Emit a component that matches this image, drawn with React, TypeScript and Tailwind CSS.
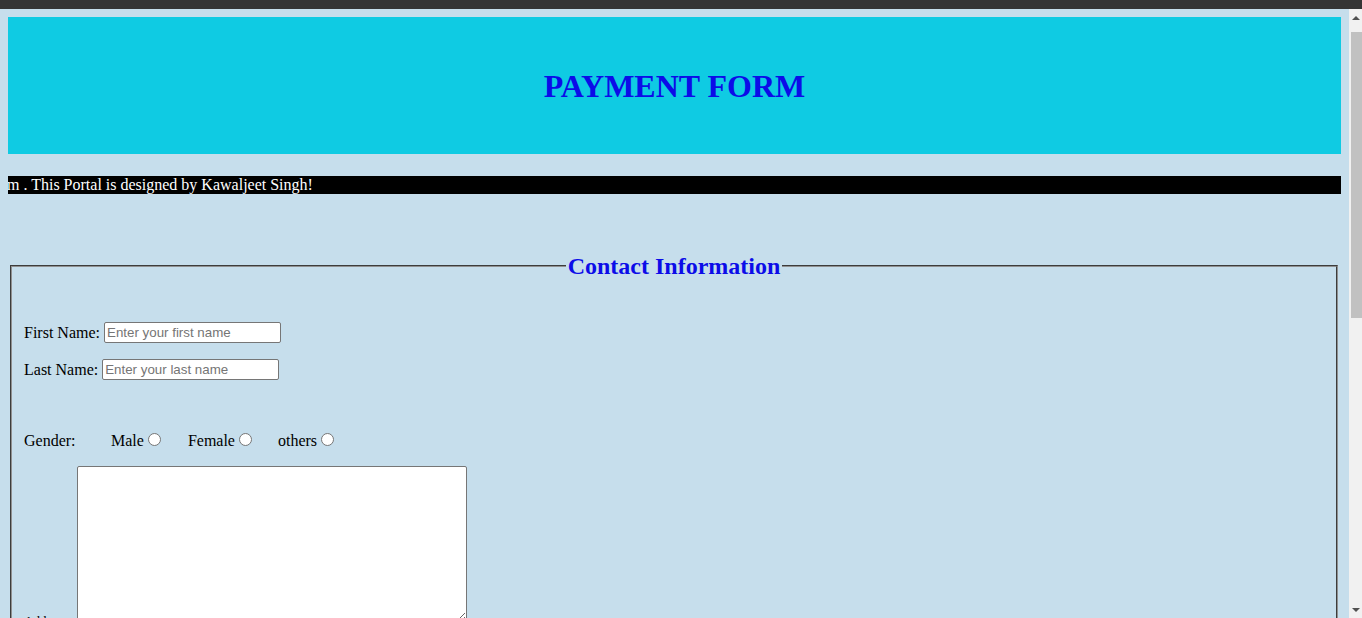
import React from "react";

function Scrollbar() {
  return (
    <div className="w-[13px] bg-[#f1f1f1] flex flex-col items-end">
      <div className="h-[23px] w-full flex justify-center pt-[7px]">
        <div className="w-0 h-0 border-l-[4px] border-r-[4px] border-b-[4px] border-l-transparent border-r-transparent border-b-[#505050]" />
      </div>
      <div className="h-[286px] w-[11px] bg-[#c1c1c1]" />
      <div className="flex-1" />
      <div className="h-[14px] w-full flex justify-center pt-[4px]">
        <div className="w-0 h-0 border-l-[4px] border-r-[4px] border-t-[4px] border-l-transparent border-r-transparent border-t-[#505050]" />
      </div>
    </div>
  );
}

function TextInput({ placeholder }: { placeholder: string }) {
  return (
    <input
      type="text"
      placeholder={placeholder}
      className="w-[177px] h-[21px] rounded-[2px] border border-[#767676] bg-white px-[2px] text-[13.33px] font-['Liberation_Sans',Arial,sans-serif] text-black placeholder:text-[#757575] outline-none"
    />
  );
}

function Radio({ label, className = "" }: { label: string; className?: string }) {
  return (
    <span className={`flex items-center ${className}`}>
      <span>{label}</span>
      <input
        type="radio"
        name="gender"
        className="appearance-none w-[13px] h-[13px] ml-[4px] mt-[-3px] rounded-full border border-[#767676] bg-white"
      />
    </span>
  );
}

export default function App() {
  return (
    <div className="w-[1362px] h-[618px] overflow-hidden flex flex-col bg-[#c6deec] font-['Liberation_Serif','Times_New_Roman',serif] text-[16px] text-black">
      <div className="h-[9px] bg-[#353535]" />
      <div className="flex flex-1 min-h-0">
        <div className="flex-1 overflow-hidden px-2 pt-2">
          <header className="h-[137px] bg-[#0fcbe3] flex items-center justify-center">
            <h1 className="text-[32px] font-bold text-[#0c0ce8] leading-none">PAYMENT FORM</h1>
          </header>

          <div className="mt-[22px] h-[18px] bg-black text-white leading-[18px] whitespace-nowrap overflow-hidden">
            <span className="-ml-[1px]">m . This Portal is designed by Kawaljeet Singh!</span>
          </div>

          <fieldset className="mt-[58px] ml-[2px] mr-[3px] border-2 [border-style:groove] border-[#909090] px-[12px] pb-[10px]">
            <legend className="mx-auto px-[2px] text-[24px] font-bold text-[#0c0ce8] leading-[28px]">
              Contact Information
            </legend>

            <div className="mt-[42px] flex items-center h-[21px] gap-1">
              <span>First Name:</span>
              <TextInput placeholder="Enter your first name" />
            </div>

            <div className="mt-[16px] flex items-center h-[21px] gap-1">
              <span>Last Name:</span>
              <TextInput placeholder="Enter your last name" />
            </div>

            <div className="mt-[50px] flex items-center h-[21px]">
              <span className="w-[87px]">Gender:</span>
              <Radio label="Male" />
              <Radio label="Female" className="ml-[27px]" />
              <Radio label="others" className="ml-[26px]" />
            </div>

            <div className="mt-[15px] flex items-end">
              <label className="w-[53px] text-[13px] leading-[13px] mb-[-5px]">Address:</label>
              <textarea className="w-[390px] h-[156px] border border-[#767676] bg-white rounded-[2px] outline-none" />
            </div>
          </fieldset>
        </div>
        <Scrollbar />
      </div>
    </div>
  );
}
